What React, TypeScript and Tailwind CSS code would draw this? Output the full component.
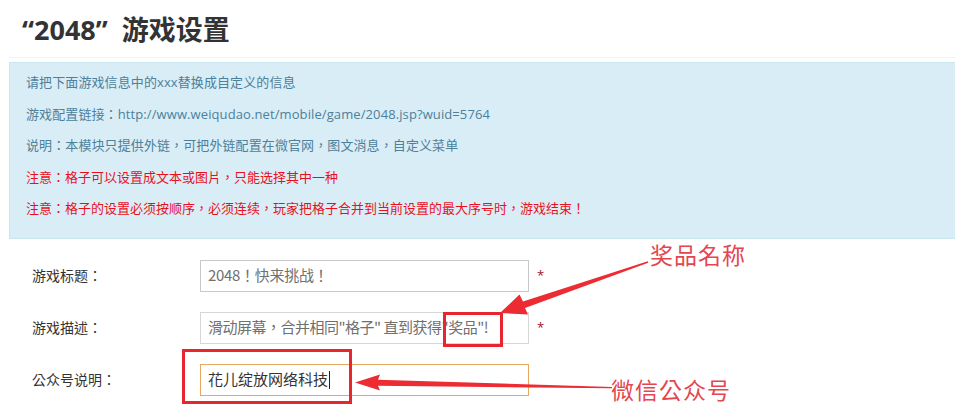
import React from "react";

const font = "font-['Open_Sans','Noto_Sans_CJK_TC',sans-serif]";
const inputFont = "font-['Noto_Sans_CJK_TC',sans-serif] text-[15px]";

const notes = [
    { text: "请把下面游戏信息中的xxx替换成自定义的信息", red: false },
    { text: "游戏配置链接：http://www.weiqudao.net/mobile/game/2048.jsp?wuid=5764", red: false },
    { text: "说明：本模块只提供外链，可把外链配置在微官网，图文消息，自定义菜单", red: false },
    { text: "注意：格子可以设置成文本或图片，只能选择其中一种", red: true },
    { text: "注意：格子的设置必须按顺序，必须连续，玩家把格子合并到当前设置的最大序号时，游戏结束！", red: true },
];

const App = () => {
    return (
        <div className={`relative w-[955px] h-[412px] overflow-hidden bg-white ${font}`}>
            {/* page header */}
            <div className="ml-[9px] h-[58px] border-b border-[#f2f2f2]">
                <h1 className="pl-[13px] pt-[13px] text-[27px] leading-[34px] font-bold text-[#333]">
                    “2048”<span className="ml-[14px]">游戏设置</span>
                </h1>
            </div>

            {/* info box */}
            <div className="ml-[9px] mt-[4px] w-[950px] border border-[#c9e6f0] bg-[#d9edf7] pl-[16px] pt-[4px] pb-[13px]">
                {notes.map(({ text, red }) => (
                    <p
                        key={text}
                        className={`h-[31.5px] leading-[31.5px] text-[13px] ${red ? "text-[#e8101c]" : "text-[#4d8099] tracking-[0.1px]"}`}
                    >
                        {text}
                    </p>
                ))}
            </div>

            {/* form */}
            <div className="mt-[21px] flex flex-col gap-[20px]">
                <div className="flex items-center h-[32px]">
                    <label className="w-[200px] pl-[32px] text-[14px] text-[#333]">游戏标题：</label>
                    <div className={`w-[329px] h-[32px] border border-[#c8c8c8] px-[7px] flex items-center text-[#707070] tracking-[-0.3px] ${inputFont}`}>
                        2048！快来挑战！
                    </div>
                    <span className="ml-[8px] text-[13px] text-[#a8102a]">*</span>
                </div>
                <div className="flex items-center h-[32px]">
                    <label className="w-[200px] pl-[32px] text-[14px] text-[#333]">游戏描述：</label>
                    <div className={`w-[329px] h-[32px] border border-[#d6d6d6] px-[7px] flex items-center text-[#707070] tracking-[-0.5px] whitespace-nowrap overflow-hidden ${inputFont}`}>
                        滑动屏幕，合并相同"格子" 直到获得"奖品"!
                    </div>
                    <span className="ml-[8px] text-[13px] text-[#a8102a]">*</span>
                </div>
                <div className="flex items-center h-[32px]">
                    <label className="w-[200px] pl-[32px] text-[14px] text-[#333]">公众号说明：</label>
                    <div className={`w-[329px] h-[32px] border border-[#e9a862] px-[7px] flex items-center text-[#333] ${inputFont}`}>
                        花儿绽放网络科技
                        <span className="ml-[1px] w-px h-[18px] bg-[#222]" />
                    </div>
                </div>
            </div>

            {/* annotations drawn over the screenshot */}
            <div className="absolute left-[443px] top-[312px] w-[60px] h-[35px] border-[3px] border-[#e8262f]" />
            <div className="absolute left-[182px] top-[349px] w-[170px] h-[55px] border-[3px] border-[#e8262f]" />

            <svg className="absolute inset-0 pointer-events-none" width="955" height="412" viewBox="0 0 955 412">
                <polygon
                    fill="#ec2b33"
                    points="647.8,261.3 523,301.5 519.5,294.5 500,313 528,314.5 525,308 648.2,262.7"
                />
                <polygon
                    fill="#ec2b33"
                    points="612,387 378,379.8 380,374.5 355,382.5 380,390.5 378,385.8 612,388.2"
                />
            </svg>
            <span className="absolute left-[650px] top-[240px] text-[23px] leading-[30px] text-[#e3464f] tracking-[1px]">
                奖品名称
            </span>
            <span className="absolute left-[611px] top-[375px] text-[23px] leading-[30px] text-[#e3464f] tracking-[1px]">
                微信公众号
            </span>
        </div>
    );
};

export default App;
